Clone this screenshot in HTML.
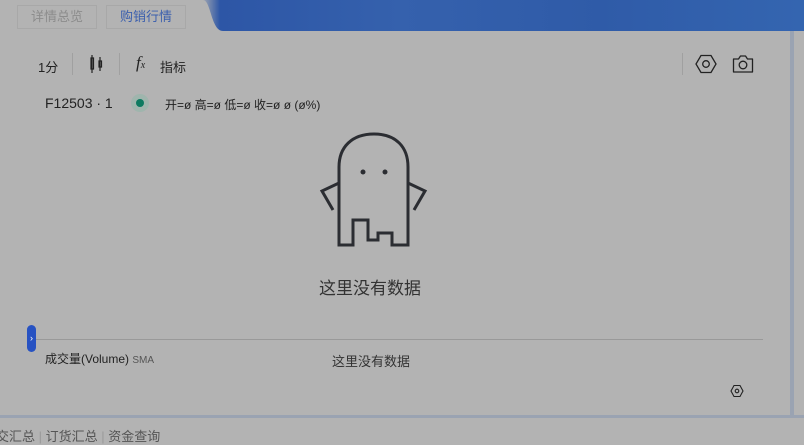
<!DOCTYPE html>
<html><head><meta charset="utf-8"><style>
body{margin:0;width:804px;height:440px;overflow:hidden;background:#b3b3b3;font-family:"Liberation Sans","Noto Sans CJK SC",sans-serif;position:relative;color:#222}
.a{position:absolute;white-space:nowrap}
</style></head><body>
<div class="a" style="left:0;top:0;width:804px;height:31px;background:linear-gradient(90deg,#b3b3b3 0,#b3b3b3 200px,#2d56a6 220px,#3561ad 400px,#2f5ba8 600px,#3465b0 800px)"></div>
<svg class="a" style="left:195px;top:0" width="40" height="31"><path d="M0 0 H8 C16 0 16 31 28 31 H0Z" fill="#b3b3b3"/></svg>
<div class="a" style="left:17px;top:5px;width:80px;height:24px;border:1px solid #a8a8a8;box-sizing:border-box;font-size:13px;color:#8c8c8c;text-align:center;line-height:22px">详情总览</div>
<div class="a" style="left:106px;top:5px;width:80px;height:24px;border:1px solid #a8a8a8;box-sizing:border-box;font-size:13px;color:#3b5fae;text-align:center;line-height:22px">购销行情</div>
<div class="a" style="left:790px;top:31px;width:4px;height:386px;background:#9aa3b2"></div>
<div class="a" style="left:0;top:415px;width:804px;height:3px;background:#9aa3b2"></div>
<div class="a" style="left:38px;top:57px;font-size:13px">1分</div>
<div class="a" style="left:72px;top:53px;width:1px;height:22px;background:#a0a0a0"></div>
<svg class="a" style="left:88px;top:54px" width="18" height="20"><path d="M4 1v18M3 4h2.5v11H3zM12 3v14M11 7h2.5v6H11z" stroke="#222" fill="none" stroke-width="1.2"/></svg>
<div class="a" style="left:119px;top:53px;width:1px;height:22px;background:#a0a0a0"></div>
<div class="a" style="left:136px;top:53px;font-size:17px;font-family:'Liberation Serif',serif;font-style:italic">f<span style="font-size:10px">x</span></div>
<div class="a" style="left:160px;top:57px;font-size:13px">指标</div>
<div class="a" style="left:682px;top:53px;width:1px;height:22px;background:#a0a0a0"></div>
<svg class="a" style="left:695px;top:54px" width="22" height="20"><path d="M6 1.5h10l5 8.5-5 8.5H6L1 10z" fill="none" stroke="#222" stroke-width="1.3"/><circle cx="11" cy="10" r="3.3" fill="none" stroke="#222" stroke-width="1.3"/></svg>
<svg class="a" style="left:732px;top:54px" width="22" height="20"><path d="M1.5 5h5l2-3h5l2 3h5v13h-19z" fill="none" stroke="#222" stroke-width="1.3" stroke-linejoin="round"/><circle cx="11" cy="11" r="3.8" fill="none" stroke="#222" stroke-width="1.3"/></svg>
<div class="a" style="left:45px;top:95px;font-size:14px">F12503 · 1</div>
<div class="a" style="left:131px;top:94px;width:18px;height:18px;border-radius:50%;background:#9fb5ad"></div>
<div class="a" style="left:136px;top:99px;width:8px;height:8px;border-radius:50%;background:#0d7a60"></div>
<div class="a" style="left:165px;top:96px;font-size:12px">开=ø 高=ø 低=ø 收=ø ø (ø%)</div>
<svg class="a" style="left:318px;top:128px" width="112" height="122"><g fill="none" stroke="#2b2d32" stroke-width="3"><path d="M21 117V39C21 19 34 6 56 6S90 19 90 39V117H74V105H60V112H50V92H35V117Z"/><path d="M21 55L4 63 15 82"/><path d="M90 55L107 63 96 82"/></g><circle cx="45" cy="44" r="2.5" fill="#2b2d32"/><circle cx="67" cy="44" r="2.5" fill="#2b2d32"/></svg>
<div class="a" style="left:319px;top:274px;font-size:17px;color:#333">这里没有数据</div>
<div class="a" style="left:27px;top:325px;width:9px;height:27px;border-radius:5px;background:#2752c2;color:#fff;font-size:9px;text-align:center;line-height:27px">›</div>
<div class="a" style="left:36px;top:339px;width:727px;height:1px;background:#999"></div>
<div class="a" style="left:45px;top:350px;font-size:12px">成交量(Volume) <span style="font-size:10px;color:#555">SMA</span></div>
<div class="a" style="left:332px;top:351px;font-size:13px;color:#333">这里没有数据</div>
<svg class="a" style="left:730px;top:384px" width="14" height="14"><path d="M4 1.5h6l3 5.5-3 5.5H4L1 7z" fill="none" stroke="#222" stroke-width="1.1"/><circle cx="7" cy="7" r="1.8" fill="none" stroke="#222" stroke-width="1.1"/></svg>
<div class="a" style="left:-4px;top:426px;font-size:13px;color:#555">交汇总 <span style="color:#999">|</span> 订货汇总 <span style="color:#999">|</span> 资金查询</div>
</body></html>
